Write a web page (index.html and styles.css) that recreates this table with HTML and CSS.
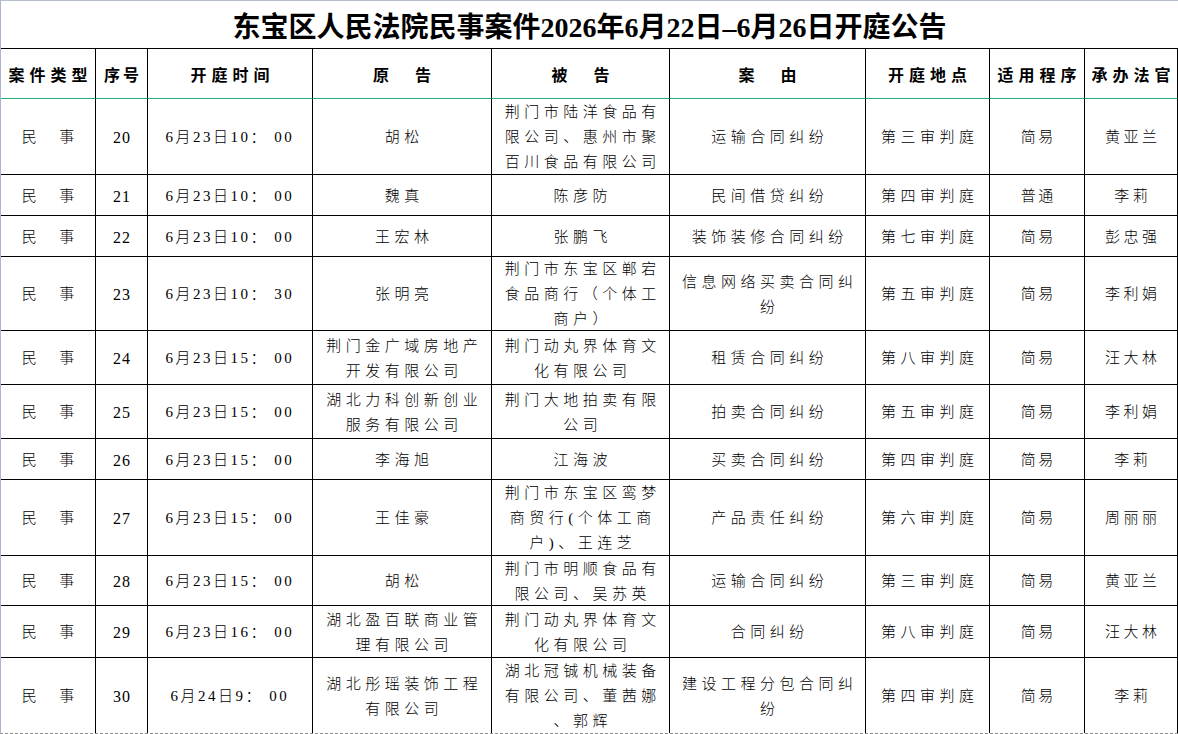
FILE: index.html
```html
<!DOCTYPE html>
<html lang="zh-CN">
<head>
<meta charset="utf-8">
<title>东宝区人民法院民事案件开庭公告</title>
<link rel="stylesheet" href="styles.css">
</head>
<body>
<div class="sheet">
  <div class="title">东宝区人民法院民事案件2026年6月22日–6月26日开庭公告</div>
  <div class="grid">
    <div class="c hd">案件类型</div>
    <div class="c hd seqh">序号</div>
    <div class="c hd">开庭时间</div>
    <div class="c hd">原　告</div>
    <div class="c hd">被　告</div>
    <div class="c hd">案　由</div>
    <div class="c hd">开庭地点</div>
    <div class="c hd">适用程序</div>
    <div class="c hd">承办法官</div>

    <div class="c kind">民　事</div><div class="c seq">20</div><div class="c time">6月23日10： 00</div><div class="c txt">胡松</div><div class="c txt">荆门市陆洋食品有<br>限公司、惠州市聚<br>百川食品有限公司</div><div class="c txt">运输合同纠纷</div><div class="c txt">第三审判庭</div><div class="c proc">简易</div><div class="c judge">黄亚兰</div>

    <div class="c kind">民　事</div><div class="c seq">21</div><div class="c time">6月23日10： 00</div><div class="c txt">魏真</div><div class="c txt">陈彦防</div><div class="c txt">民间借贷纠纷</div><div class="c txt">第四审判庭</div><div class="c proc">普通</div><div class="c judge">李莉</div>

    <div class="c kind">民　事</div><div class="c seq">22</div><div class="c time">6月23日10： 00</div><div class="c txt">王宏林</div><div class="c txt">张鹏飞</div><div class="c txt">装饰装修合同纠纷</div><div class="c txt">第七审判庭</div><div class="c proc">简易</div><div class="c judge">彭忠强</div>

    <div class="c kind">民　事</div><div class="c seq">23</div><div class="c time">6月23日10： 30</div><div class="c txt">张明亮</div><div class="c txt">荆门市东宝区郸宕<br>食品商行（个体工<br>商户）</div><div class="c txt">信息网络买卖合同纠<br>纷</div><div class="c txt">第五审判庭</div><div class="c proc">简易</div><div class="c judge">李利娟</div>

    <div class="c kind">民　事</div><div class="c seq">24</div><div class="c time">6月23日15： 00</div><div class="c txt">荆门金广域房地产<br>开发有限公司</div><div class="c txt">荆门动丸界体育文<br>化有限公司</div><div class="c txt">租赁合同纠纷</div><div class="c txt">第八审判庭</div><div class="c proc">简易</div><div class="c judge">汪大林</div>

    <div class="c kind">民　事</div><div class="c seq">25</div><div class="c time">6月23日15： 00</div><div class="c txt">湖北力科创新创业<br>服务有限公司</div><div class="c txt">荆门大地拍卖有限<br>公司</div><div class="c txt">拍卖合同纠纷</div><div class="c txt">第五审判庭</div><div class="c proc">简易</div><div class="c judge">李利娟</div>

    <div class="c kind">民　事</div><div class="c seq">26</div><div class="c time">6月23日15： 00</div><div class="c txt">李海旭</div><div class="c txt">江海波</div><div class="c txt">买卖合同纠纷</div><div class="c txt">第四审判庭</div><div class="c proc">简易</div><div class="c judge">李莉</div>

    <div class="c kind">民　事</div><div class="c seq">27</div><div class="c time">6月23日15： 00</div><div class="c txt">王佳豪</div><div class="c txt">荆门市东宝区鸾梦<br>商贸行(个体工商<br>户)、王连芝</div><div class="c txt">产品责任纠纷</div><div class="c txt">第六审判庭</div><div class="c proc">简易</div><div class="c judge">周丽丽</div>

    <div class="c kind">民　事</div><div class="c seq">28</div><div class="c time">6月23日15： 00</div><div class="c txt">胡松</div><div class="c txt">荆门市明顺食品有<br>限公司、吴苏英</div><div class="c txt">运输合同纠纷</div><div class="c txt">第三审判庭</div><div class="c proc">简易</div><div class="c judge">黄亚兰</div>

    <div class="c kind">民　事</div><div class="c seq">29</div><div class="c time">6月23日16： 00</div><div class="c txt">湖北盈百联商业管<br>理有限公司</div><div class="c txt">荆门动丸界体育文<br>化有限公司</div><div class="c txt">合同纠纷</div><div class="c txt">第八审判庭</div><div class="c proc">简易</div><div class="c judge">汪大林</div>

    <div class="c kind">民　事</div><div class="c seq">30</div><div class="c time">6月24日9： 00</div><div class="c txt">湖北彤瑶装饰工程<br>有限公司</div><div class="c txt">湖北冠铖机械装备<br>有限公司、董茜娜<br>、郭辉</div><div class="c txt">建设工程分包合同纠<br>纷</div><div class="c txt">第四审判庭</div><div class="c proc">简易</div><div class="c judge">李莉</div>
  </div>
</div>
</body>
</html>
```

FILE: styles.css
```css
html, body {
  margin: 0;
  padding: 0;
  background: #ffffff;
}

body {
  font-family: "Liberation Serif", "Noto Sans CJK SC", serif;
  color: #000000;
}

.sheet {
  width: 1178px;
  height: 734px;
  box-sizing: border-box;
  border-left: 1px solid #a9b6cc;
  border-top: 1px solid #b7becb;
  border-bottom: 1px dashed #8c8c8c;
  overflow: hidden;
  background: #ffffff;
}

.title {
  height: 47px;
  display: flex;
  align-items: center;
  justify-content: center;
  font-size: 28px;
  font-weight: bold;
  white-space: nowrap;
}

.grid {
  display: grid;
  grid-template-columns: 95px 52px 165px 179px 178px 196px 124px 95px 93px;
  grid-template-rows: 50px 76px 41px 41px 74px 54px 54px 41px 76px 50px 52px 76px;
  border-top: 1px solid #000000;
}

.c {
  --ls: 4.5px;
  box-sizing: border-box;
  border-right: 1px solid #000000;
  border-bottom: 1px solid #000000;
  display: flex;
  align-items: center;
  justify-content: center;
  text-align: center;
  font-size: 15px;
  font-weight: 300;
  line-height: 25px;
  white-space: nowrap;
  letter-spacing: var(--ls);
  padding-left: var(--ls);
  padding-top: 2px;
}

.hd {
  --ls: 5px;
  font-size: 16px;
  font-weight: bold;
  border-bottom-color: #22b177;
  padding-top: 3px;
}

.hd.seqh {
  --ls: 3px;
}

.kind {
  --ls: 3.8px;
}

.seq {
  --ls: 1px;
  font-size: 16px;
}

.time {
  --ls: 2.5px;
  padding-left: 0;
}

.proc {
  --ls: 2.5px;
}

.judge {
  --ls: 3.5px;
}
```
